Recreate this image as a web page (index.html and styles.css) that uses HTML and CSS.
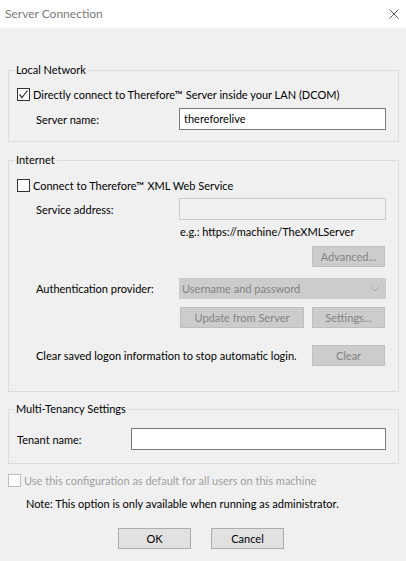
FILE: index.html
```html
<!DOCTYPE html>
<html>
<head>
<meta charset="utf-8">
<link rel="stylesheet" href="styles.css">
</head>
<body>
<div class="dialog">
  <div class="titlebar">
    <span class="title">Server Connection</span>
    <svg class="close" width="10" height="10" viewBox="0 0 10 10"><path d="M0.5 0.5L9.5 9.5M9.5 0.5L0.5 9.5" stroke="#5a5a5a" stroke-width="1" fill="none"/></svg>
  </div>
  <div class="body">
    <fieldset class="group g1">
      <legend>Local Network</legend>
      <div class="checkrow">
        <span class="cb checked"><svg width="11" height="11" viewBox="0 0 11 11"><path d="M1.5 5.5L4 8.5L9.5 1.5" stroke="#333" stroke-width="1.2" fill="none"/></svg></span>
        <span>Directly connect to Therefore™ Server inside your LAN (DCOM)</span>
      </div>
      <div class="fieldrow r-server">
        <span class="label">Server name:</span>
        <span class="input">thereforelive</span>
      </div>
    </fieldset>

    <fieldset class="group g2">
      <legend>Internet</legend>
      <div class="checkrow">
        <span class="cb"></span>
        <span>Connect to Therefore™ XML Web Service</span>
      </div>
      <div class="fieldrow r-service">
        <span class="label">Service address:</span>
        <span class="input disabled"></span>
      </div>
      <div class="hint">e.g.: https://machine/TheXMLServer</div>
      <div class="btnrow r-adv">
        <span class="btn dis w73">Advanced...</span>
      </div>
      <div class="fieldrow r-auth">
        <span class="label">Authentication provider:</span>
        <span class="select">
          <span>Username and password</span>
          <svg width="10" height="6" viewBox="0 0 10 6"><path d="M0.5 0.5L5 5L9.5 0.5" stroke="#a8a8a8" fill="none"/></svg>
        </span>
      </div>
      <div class="btnrow r-update">
        <span class="btn dis w124">Update from Server</span>
        <span class="btn dis w73">Settings...</span>
      </div>
      <div class="clearrow">
        <span class="label">Clear saved logon information to stop automatic login.</span>
        <span class="btn dis w73">Clear</span>
      </div>
    </fieldset>

    <fieldset class="group g3">
      <legend>Multi-Tenancy Settings</legend>
      <div class="fieldrow r-tenant">
        <span class="label">Tenant name:</span>
        <span class="input"></span>
      </div>
    </fieldset>

    <div class="checkrow defrow">
      <span class="cb disabled"></span>
      <span class="grey">Use this configuration as default for all users on this machine</span>
    </div>
    <div class="note">Note: This option is only available when running as administrator.</div>
    <div class="footer">
      <span class="btn w73">OK</span>
      <span class="btn w73">Cancel</span>
    </div>
  </div>
</div>
</body>
</html>
```

FILE: styles.css
```css
* { box-sizing: border-box; }
html, body { margin: 0; padding: 0; }
body {
  width: 406px;
  height: 561px;
  background: #f0f0f0;
  font-family: Lato, "Noto Sans", sans-serif;
  font-size: 11px;
  color: #000;
  overflow: hidden;
  white-space: nowrap;
}
.dialog { width: 406px; height: 561px; display: flex; flex-direction: column; }
.titlebar {
  height: 28px;
  background: #fff;
  display: flex;
  align-items: center;
  justify-content: space-between;
  padding: 0 7px 2px 5px;
  flex: none;
}
.title { color: #7a7a7a; font-size: 12px; }
.close { margin-top: 2px; }
.body { padding: 0 7px 0 8px; }

.group {
  margin: 0;
  padding: 0 12px 0 8px;
  border: 1px solid #dcdcdc;
  min-width: 0;
}
.group legend {
  padding: 0 2px 0 1px;
  margin-left: -2px;
  line-height: 16px;
  height: 16px;
}
.g1 { margin-top: 34px; padding-bottom: 11px; }
.g2 { margin-top: 10px; padding-bottom: 25px; }
.g3 { margin-top: 9px; padding-bottom: 13px; }

.checkrow {
  display: flex;
  align-items: center;
  height: 15px;
  line-height: 15px;
  gap: 3px;
}
.g1 .checkrow { margin-top: 9px; }
.g2 .checkrow { margin-top: 10px; }
.cb {
  width: 13px;
  height: 13px;
  border: 1px solid #333;
  background: #fff;
  display: flex;
  align-items: center;
  justify-content: center;
  flex: none;
}
.cb.disabled { border-color: #bcbcbc; }
.grey { color: #a0a0a0; }

.fieldrow {
  display: flex;
  align-items: center;
  padding-left: 19px;
}
.fieldrow .label { width: 143px; flex: none; }
.input {
  flex: 1;
  height: 22px;
  background: #fff;
  border: 1px solid #7a7a7a;
  padding: 0 4px;
  line-height: 19px;
}
.input.disabled { background: #f0f0f0; border-color: #cccccc; }
.r-server { margin-top: 6px; }
.r-service { margin-top: 5px; }
.r-tenant { margin-top: 11px; padding-left: 0; }
.r-tenant .label { width: 114px; }

.hint { margin-top: 4px; padding-left: 163px; line-height: 16px; height: 16px; }

.btnrow { display: flex; justify-content: flex-end; gap: 8px; padding-right: 1px; }
.r-adv { margin-top: 6px; }
.r-auth { margin-top: 11px; }
.r-update { margin-top: 8px; }

.btn {
  height: 21px;
  display: flex;
  align-items: center;
  justify-content: center;
  background: #e1e1e1;
  border: 1px solid #adadad;
  flex: none;
}
.btn.dis { background: #cccccc; border-color: #bfbfbf; color: #838383; }
.w73 { width: 73px; }
.w124 { width: 124px; }

.select {
  flex: 1;
  height: 21px;
  background: #cccccc;
  border: 1px solid #cccccc;
  color: #838383;
  display: flex;
  align-items: center;
  justify-content: space-between;
  padding: 0 5px 0 2px;
}

.clearrow {
  margin-top: 17px;
  display: flex;
  align-items: center;
  justify-content: space-between;
  padding-left: 19px;
  padding-right: 1px;
}

.defrow { margin-top: 9px; }
.note { margin-top: 8px; padding-left: 18px; line-height: 16px; height: 16px; }
.footer {
  margin-top: 16px;
  display: flex;
  gap: 20px;
  padding-left: 110px;
}
```
